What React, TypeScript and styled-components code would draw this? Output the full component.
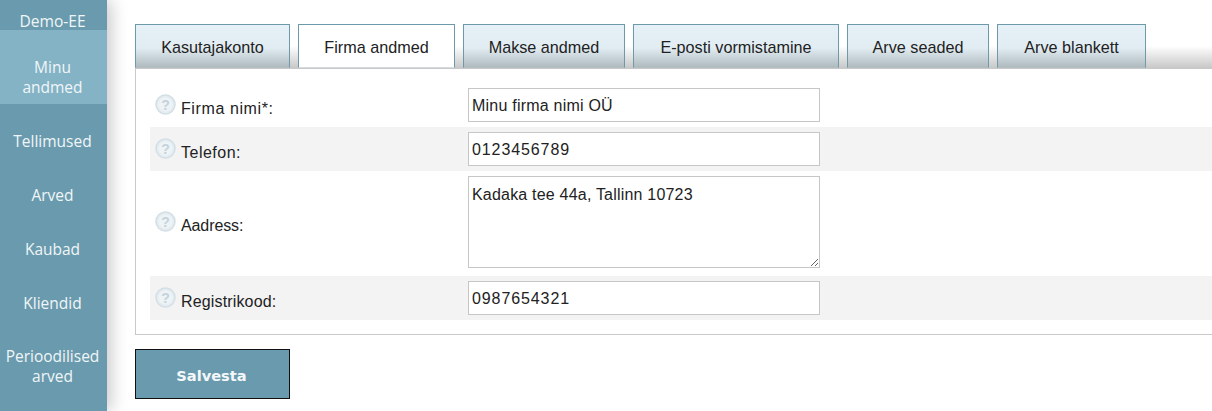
import styled, { createGlobalStyle } from "styled-components";

const GlobalStyle = createGlobalStyle`
  html, body {
    margin: 0;
    padding: 0;
    background: #fff;
    overflow: hidden;
  }
`;

const Page = styled.div`
  display: flex;
  width: 1212px;
  height: 411px;
  overflow: hidden;
  font-family: "Liberation Sans", Arial, sans-serif;
  color: #222;
`;

const Sidebar = styled.nav`
  flex: 0 0 107px;
  height: 411px;
  background: #6a9aad;
  box-shadow: 4px 0 16px rgba(0, 0, 0, 0.22);
  font-family: "Open Sans", sans-serif;
  position: relative;
`;

const Brand = styled.div`
  box-sizing: border-box;
  height: 30px;
  padding: 11px 2px 0 0;
  line-height: 20px;
  text-align: center;
  color: #f0f6f8;
  font-size: 15.6px;
`;

const NavItem = styled.a<{ $active?: boolean; $tall?: boolean }>`
  display: flex;
  box-sizing: border-box;
  align-items: center;
  justify-content: center;
  height: ${(p) => (p.$active || p.$tall ? "74px" : "54px")};
  padding: ${(p) => (p.$tall ? "18px" : "20px")} 2px 0 0;
  background: ${(p) => (p.$active ? "#84b3c6" : "transparent")};
  color: #f0f6f8;
  font-size: 15.5px;
  line-height: 20px;
  text-align: center;
`;

const Main = styled.main`
  flex: 1;
  min-width: 0;
  padding: 24px 0 0 28px;
`;

const TabBar = styled.div`
  display: flex;
  gap: 8px;
  height: 44px;
  background: linear-gradient(to bottom, transparent 50%, #c8c8c8 100%);
`;

const Tab = styled.div<{ $active?: boolean; $width: number }>`
  box-sizing: border-box;
  width: ${(p) => p.$width}px;
  height: 44px;
  border: 1px solid #6d9aab;
  border-bottom: 1px solid ${(p) => (p.$active ? "#d5dcdf" : "#b3bcc0")};
  background: ${(p) =>
    p.$active
      ? "#fff"
      : "linear-gradient(to bottom, #e6f1f7 0%, #e2edf3 55%, #b0bbc0 100%)"};
  font-size: 16.2px;
  line-height: 45px;
  text-align: center;
  color: #222;
`;

const Panel = styled.section`
  box-sizing: border-box;
  height: 267px;
  padding: 15px 0 14px 14px;
  border: 1px solid #c9c9c9;
  border-right: none;
  background: #fff;
`;

const Row = styled.div<{ $shaded?: boolean; $height: number; $inset?: number }>`
  display: flex;
  box-sizing: border-box;
  align-items: center;
  height: ${(p) => p.$height}px;
  padding-bottom: ${(p) => p.$inset ?? 0}px;
  background: ${(p) => (p.$shaded ? "#f3f3f3" : "#fff")};
`;

const Label = styled.label`
  display: flex;
  align-items: center;
  flex: 0 0 318px;
  padding-left: 5px;
  box-sizing: border-box;
  font-size: 16px;
  color: #222;
`;

const LabelText = styled.span<{ $spacing: number }>`
  margin: 8px 0 0 5px;
  letter-spacing: ${(p) => p.$spacing}px;
`;

const HelpIcon = styled.svg`
  flex: 0 0 21px;
  width: 21px;
  height: 21px;
  margin-top: -1px;
`;

const TextInput = styled.input<{ $digits?: boolean }>`
  box-sizing: border-box;
  width: 352px;
  height: 34px;
  padding: 2px 3px 0;
  border: 1px solid #c6c6c6;
  border-radius: 0;
  outline: none;
  background: #fff;
  font-family: "Liberation Sans", Arial, sans-serif;
  font-size: 16px;
  letter-spacing: ${(p) => (p.$digits ? "0.9px" : "0.22px")};
  color: #222;
`;

const TextArea = styled.textarea`
  display: block;
  box-sizing: border-box;
  width: 352px;
  height: 92px;
  padding: 9px 3px 8px;
  border: 1px solid #c6c6c6;
  border-radius: 0;
  outline: none;
  background: #fff;
  font-family: "Liberation Sans", Arial, sans-serif;
  font-size: 16px;
  letter-spacing: 0.2px;
  color: #222;
`;

const SaveButton = styled.button`
  display: block;
  box-sizing: border-box;
  width: 155px;
  height: 50px;
  margin-top: 14px;
  padding: 2px 8px 0 6px;
  border: 1px solid #111;
  background: #6a9aad;
  color: #f4f8fa;
  font-family: "DejaVu Sans", Verdana, sans-serif;
  font-size: 14.6px;
  font-weight: bold;
`;

const Help = () => (
  <HelpIcon viewBox="0 0 21 21">
    <circle cx="10.5" cy="10.5" r="9.5" fill="#e6edf1" stroke="#d3dfe6" strokeWidth="1.5" />
    <circle cx="10.5" cy="10.5" r="7" fill="#eef3f6" />
    <text
      x="10.5"
      y="15.5"
      textAnchor="middle"
      fontFamily="Liberation Sans, sans-serif"
      fontSize="14"
      fontWeight="bold"
      fill="#c3d3dc"
    >
      ?
    </text>
  </HelpIcon>
);

const tabs = [
  { title: "Kasutajakonto", width: 155 },
  { title: "Firma andmed", width: 157, active: true },
  { title: "Makse andmed", width: 162 },
  { title: "E-posti vormistamine", width: 206 },
  { title: "Arve seaded", width: 142 },
  { title: "Arve blankett", width: 149 },
];

const menu = ["Tellimused", "Arved", "Kaubad", "Kliendid"];

export default function App() {
  return (
    <Page>
      <GlobalStyle />
      <Sidebar>
        <Brand>Demo-EE</Brand>
        <NavItem $active>
          Minu
          <br />
          andmed
        </NavItem>
        {menu.map((item) => (
          <NavItem key={item}>{item}</NavItem>
        ))}
        <NavItem $tall>
          Perioodilised
          <br />
          arved
        </NavItem>
      </Sidebar>
      <Main>
        <TabBar>
          {tabs.map((tab) => (
            <Tab key={tab.title} $active={tab.active} $width={tab.width}>
              {tab.title}
            </Tab>
          ))}
        </TabBar>
        <Panel>
          <Row $height={43} $inset={1}>
            <Label>
              <Help />
              <LabelText $spacing={0.6}>Firma nimi*:</LabelText>
            </Label>
            <TextInput readOnly value="Minu firma nimi OÜ" />
          </Row>
          <Row $height={44} $shaded>
            <Label>
              <Help />
              <LabelText $spacing={0.5}>Telefon:</LabelText>
            </Label>
            <TextInput readOnly $digits value="0123456789" />
          </Row>
          <Row $height={105} $inset={3}>
            <Label>
              <Help />
              <LabelText $spacing={-0.1}>Aadress:</LabelText>
            </Label>
            <TextArea readOnly value="Kadaka tee 44a, Tallinn 10723" />
          </Row>
          <Row $height={44} $shaded>
            <Label>
              <Help />
              <LabelText $spacing={0.15}>Registrikood:</LabelText>
            </Label>
            <TextInput readOnly $digits value="0987654321" />
          </Row>
        </Panel>
        <SaveButton>Salvesta</SaveButton>
      </Main>
    </Page>
  );
}
